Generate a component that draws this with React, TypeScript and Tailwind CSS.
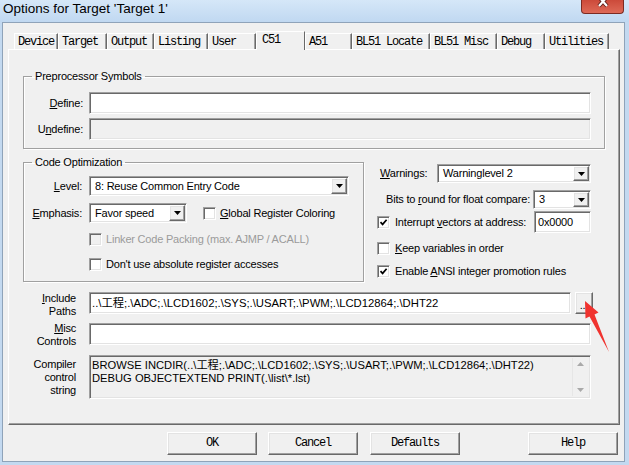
import React from "react"

const sunken =
  "border border-t-[#a0a0a0] border-l-[#a0a0a0] border-b-white border-r-white shadow-[inset_1px_1px_0_#696969,inset_-1px_-1px_0_#e3e3e3]"
const raised =
  "border border-t-white border-l-white border-r-[#696969] border-b-[#696969] shadow-[inset_-1px_-1px_0_#a0a0a0,inset_1px_1px_0_#e3e3e3]"

const tabs = [
  { label: "Device", w: "w-[44px]" },
  { label: "Target", w: "w-[49px]" },
  { label: "Output", w: "w-[47px]" },
  { label: "Listing", w: "w-[54px]" },
  { label: "User", w: "w-[48px]" },
  { label: "C51", w: "w-[49px]", active: true },
  { label: "A51", w: "w-[47px]" },
  { label: "BL51 Locate", w: "w-[78px]" },
  { label: "BL51 Misc", w: "w-[67px]" },
  { label: "Debug", w: "w-[48px]" },
  { label: "Utilities", w: "w-[64px]" },
]

function Tri({ color = "#000" }: { color?: string }) {
  return (
    <svg width="7" height="4" viewBox="0 0 7 4">
      <path d="M0 0h7L3.5 4z" fill={color} />
    </svg>
  )
}

function Check({ checked, disabled }: { checked?: boolean; disabled?: boolean }) {
  return (
    <span
      className={`flex h-[13px] w-[13px] shrink-0 items-center justify-center ${sunken} ${
        disabled ? "bg-[#f0f0f0]" : "bg-white"
      }`}
    >
      {checked && (
        <svg width="9" height="9" viewBox="0 0 9 9">
          <path d="M1.5 4.2 L3.6 6.4 L7.6 1.8" stroke="#000" strokeWidth="1.7" fill="none" />
        </svg>
      )}
    </span>
  )
}

function Combo({ value, className }: { value: string; className: string }) {
  return (
    <div className={`flex items-center bg-white ${sunken} ${className}`}>
      <span className="flex-1 truncate pl-[5px]">{value}</span>
      <span className={`mr-[1px] flex h-[calc(100%-2px)] w-[16px] items-center justify-center bg-[#f0f0f0] ${raised}`}>
        <Tri />
      </span>
    </div>
  )
}

function Group({ title, className, children }: { title: string; className: string; children: React.ReactNode }) {
  return (
    <fieldset className={`border border-[#a0a0a0] shadow-[1px_1px_0_#fff,inset_1px_1px_0_#fff] ${className}`}>
      <legend className="ml-[8px] px-[3px] leading-[13px]">{title}</legend>
      {children}
    </fieldset>
  )
}

export default function App() {
  return (
    <div className="relative flex h-[465px] w-[629px] flex-col overflow-hidden bg-[#c3d9f0] font-['Liberation_Sans','Noto_Sans_CJK_SC',sans-serif] text-[11px] leading-[13px] tracking-[-0.2px] text-black">
      {/* title bar */}
      <div className="flex h-[22px] shrink-0 items-start justify-between bg-[linear-gradient(180deg,#d5e7f8_0%,#c0d8f1_100%)]">
        <span className="pl-[3px] pt-[1px] text-[13.5px] leading-[16px] tracking-normal">Options for Target 'Target 1'</span>
        <div className="mr-[5px] flex h-[14px] w-[43px] items-start justify-center rounded-b-[4px] border border-t-0 border-[#7c2b22] bg-[linear-gradient(180deg,#cc4a3a_0%,#de6a57_100%)]">
          <svg width="14" height="10" viewBox="0 0 14 10">
            <path d="M3 -3 L11 6 M11 -3 L3 6" stroke="#5b2019" strokeWidth="4" fill="none" />
            <path d="M3 -3 L11 6 M11 -3 L3 6" stroke="#fff" strokeWidth="2.2" fill="none" />
          </svg>
        </div>
      </div>

      <div className="mb-[3px] ml-[2px] mr-[4px] flex flex-1 flex-col border border-[#8fa3b9] bg-[#f0f0f0]">
        <div className="ml-[5px] mt-[8px] w-[612px]">
          {/* tabs */}
          <div className="flex h-[18px] items-end pl-[6px] font-['Liberation_Mono',monospace] text-[12px] tracking-[-1.2px]">
            {tabs.map((t) =>
              t.active ? (
                <div
                  key={t.label}
                  className={`relative z-10 -mb-[1px] h-[19px] ${t.w} border-l border-r border-t border-l-white border-t-white border-r-[#696969] bg-[#f0f0f0] pl-[5px] leading-[16px]`}
                >
                  {t.label}
                </div>
              ) : (
                <div
                  key={t.label}
                  className={`h-[16px] ${t.w} border-l border-r border-t border-l-white border-t-white border-r-[#696969] pl-[3px] leading-[16px] shadow-[inset_-1px_0_0_#a0a0a0]`}
                >
                  {t.label}
                </div>
              )
            )}
          </div>

          {/* tab page */}
          <div className="h-[376px] w-[612px] border border-b-[#696969] border-l-white border-r-[#696969] border-t-white px-[14px] pt-[20px] shadow-[inset_-1px_-1px_0_#a0a0a0]">
            <Group title="Preprocessor Symbols" className="w-[582px] pb-[8px]">
              <div className="flex items-center pt-[9px]">
                <span className="w-[59px] text-right">
                  <u>D</u>efine:
                </span>
                <div className={`ml-[6px] h-[22px] w-[502px] bg-white ${sunken}`} />
              </div>
              <div className="mt-[4px] flex items-center">
                <span className="w-[59px] text-right">
                  U<u>n</u>define:
                </span>
                <div className={`ml-[6px] h-[22px] w-[502px] bg-[#f0f0f0] ${sunken}`} />
              </div>
            </Group>

            <div className="mt-[7px] flex items-start">
              <Group title="Code Optimization" className="w-[341px] pb-[10px]">
                <div className="flex items-center pt-[7px]">
                  <span className="w-[58px] text-right">
                    <u>L</u>evel:
                  </span>
                  <Combo value="8: Reuse Common Entry Code" className="ml-[7px] h-[20px] w-[260px]" />
                </div>
                <div className="mt-[7px] flex items-center">
                  <span className="w-[58px] text-right">
                    <u>E</u>mphasis:
                  </span>
                  <Combo value="Favor speed" className="ml-[7px] h-[20px] w-[98px]" />
                  <span className="ml-[16px]">
                    <Check />
                  </span>
                  <span className="ml-[4px] whitespace-nowrap">
                    <u>G</u>lobal Register Coloring
                  </span>
                </div>
                <div className="mt-[10px] flex h-[13px] items-center pl-[65px] text-[#9b9b9b]">
                  <Check disabled />
                  <span className="ml-[4px] whitespace-nowrap">Linker Code Packing (max. AJMP / ACALL)</span>
                </div>
                <div className="mt-[12px] flex h-[13px] items-center pl-[65px]">
                  <Check />
                  <span className="ml-[4px] whitespace-nowrap">Don't use absolute register accesses</span>
                </div>
              </Group>

              <div className="ml-[13px] flex w-[214px] flex-col">
                <div className="mt-[8px] flex h-[19px] items-center">
                  <span className="pl-[3px]">
                    <u>W</u>arnings:
                  </span>
                  <Combo value="Warninglevel 2" className="ml-auto h-[19px] w-[154px]" />
                </div>
                <div className="mt-[7px] flex h-[19px] items-center">
                  <span className="whitespace-nowrap pl-[9px]">
                    Bits to <u>r</u>ound for float compare:
                  </span>
                  <Combo value="3" className="ml-auto h-[19px] w-[58px] shrink-0" />
                </div>
                <div className="mt-[2px] flex h-[22px] items-center">
                  <Check checked />
                  <span className="ml-[5px] whitespace-nowrap">
                    Interrupt <u>v</u>ectors at address:
                  </span>
                  <div className={`ml-auto flex h-[22px] w-[57px] shrink-0 items-center bg-white pl-[3px] ${sunken}`}>0x0000</div>
                </div>
                <div className="mt-[9px] flex h-[13px] items-center">
                  <Check />
                  <span className="ml-[5px]">
                    <u>K</u>eep variables in order
                  </span>
                </div>
                <div className="mt-[10px] flex h-[13px] items-center">
                  <Check checked />
                  <span className="ml-[5px] whitespace-nowrap">
                    Enable <u>A</u>NSI integer promotion rules
                  </span>
                </div>
              </div>
            </div>

            {/* include / misc / compiler */}
            <div className="-ml-[14px] mt-[10px] flex h-[22px] items-start">
              <span className="w-[67px] text-right">
                <u>I</u>nclude
                <br />
                Paths
              </span>
              <div className={`ml-[13px] flex h-[22px] w-[482px] items-center bg-white pl-[2px] text-[11.3px] tracking-normal ${sunken}`}>
                ..\工程;.\ADC;.\LCD1602;.\SYS;.\USART;.\PWM;.\LCD12864;.\DHT22
              </div>
              <div className={`ml-[4px] flex h-[22px] w-[18px] items-end justify-center pb-[3px] leading-[10px] ${raised}`}>
                ...
              </div>
            </div>
            <div className="-ml-[14px] mt-[9px] flex h-[22px] items-center">
              <span className="mt-[1px] w-[67px] text-right">
                <u>M</u>isc
                <br />
                Controls
              </span>
              <div className={`ml-[13px] h-[22px] w-[502px] bg-white ${sunken}`} />
            </div>
            <div className="-ml-[14px] mt-[10px] flex h-[44px] items-center">
              <span className="w-[67px] text-right">
                Compiler
                <br />
                control
                <br />
                string
              </span>
              <div className={`ml-[13px] flex h-[44px] w-[502px] bg-[#f0f0f0] text-[11.2px] tracking-normal ${sunken}`}>
                <div className="flex-1 pl-[2px] pt-[3px]">
                  BROWSE INCDIR(..\工程;.\ADC;.\LCD1602;.\SYS;.\USART;.\PWM;.\LCD12864;.\DHT22)
                  <br />
                  DEBUG OBJECTEXTEND PRINT(.\list\*.lst)
                </div>
                <div className="my-[2px] mr-[2px] flex w-[16px] flex-col items-center justify-between border-l border-[#e6e6e6] py-[4px]">
                  <span className="rotate-180">
                    <Tri color="#a9a9a9" />
                  </span>
                  <Tri color="#a9a9a9" />
                </div>
              </div>
            </div>
          </div>

          {/* buttons */}
          <div className="mt-[7px] flex h-[23px] font-['Liberation_Mono',monospace] text-[12px] tracking-[-1.2px]">
            <div className={`ml-[159px] flex w-[90px] items-center justify-center ${raised}`}>OK</div>
            <div className={`ml-[11px] flex w-[90px] items-center justify-center ${raised}`}>Cancel</div>
            <div className={`ml-[12px] flex w-[90px] items-center justify-center ${raised}`}>Defaults</div>
            <div className={`ml-[68px] flex w-[90px] items-center justify-center ${raised}`}>Help</div>
          </div>
        </div>
      </div>

      {/* red annotation arrow */}
      <svg className="pointer-events-none absolute left-0 top-0" width="629" height="465" viewBox="0 0 629 465">
        <polygon points="585,301 598.5,312.5 594.5,314.5 609,352 589.5,316.5 585.5,318.5" fill="#f0332f" />
      </svg>
    </div>
  )
}
